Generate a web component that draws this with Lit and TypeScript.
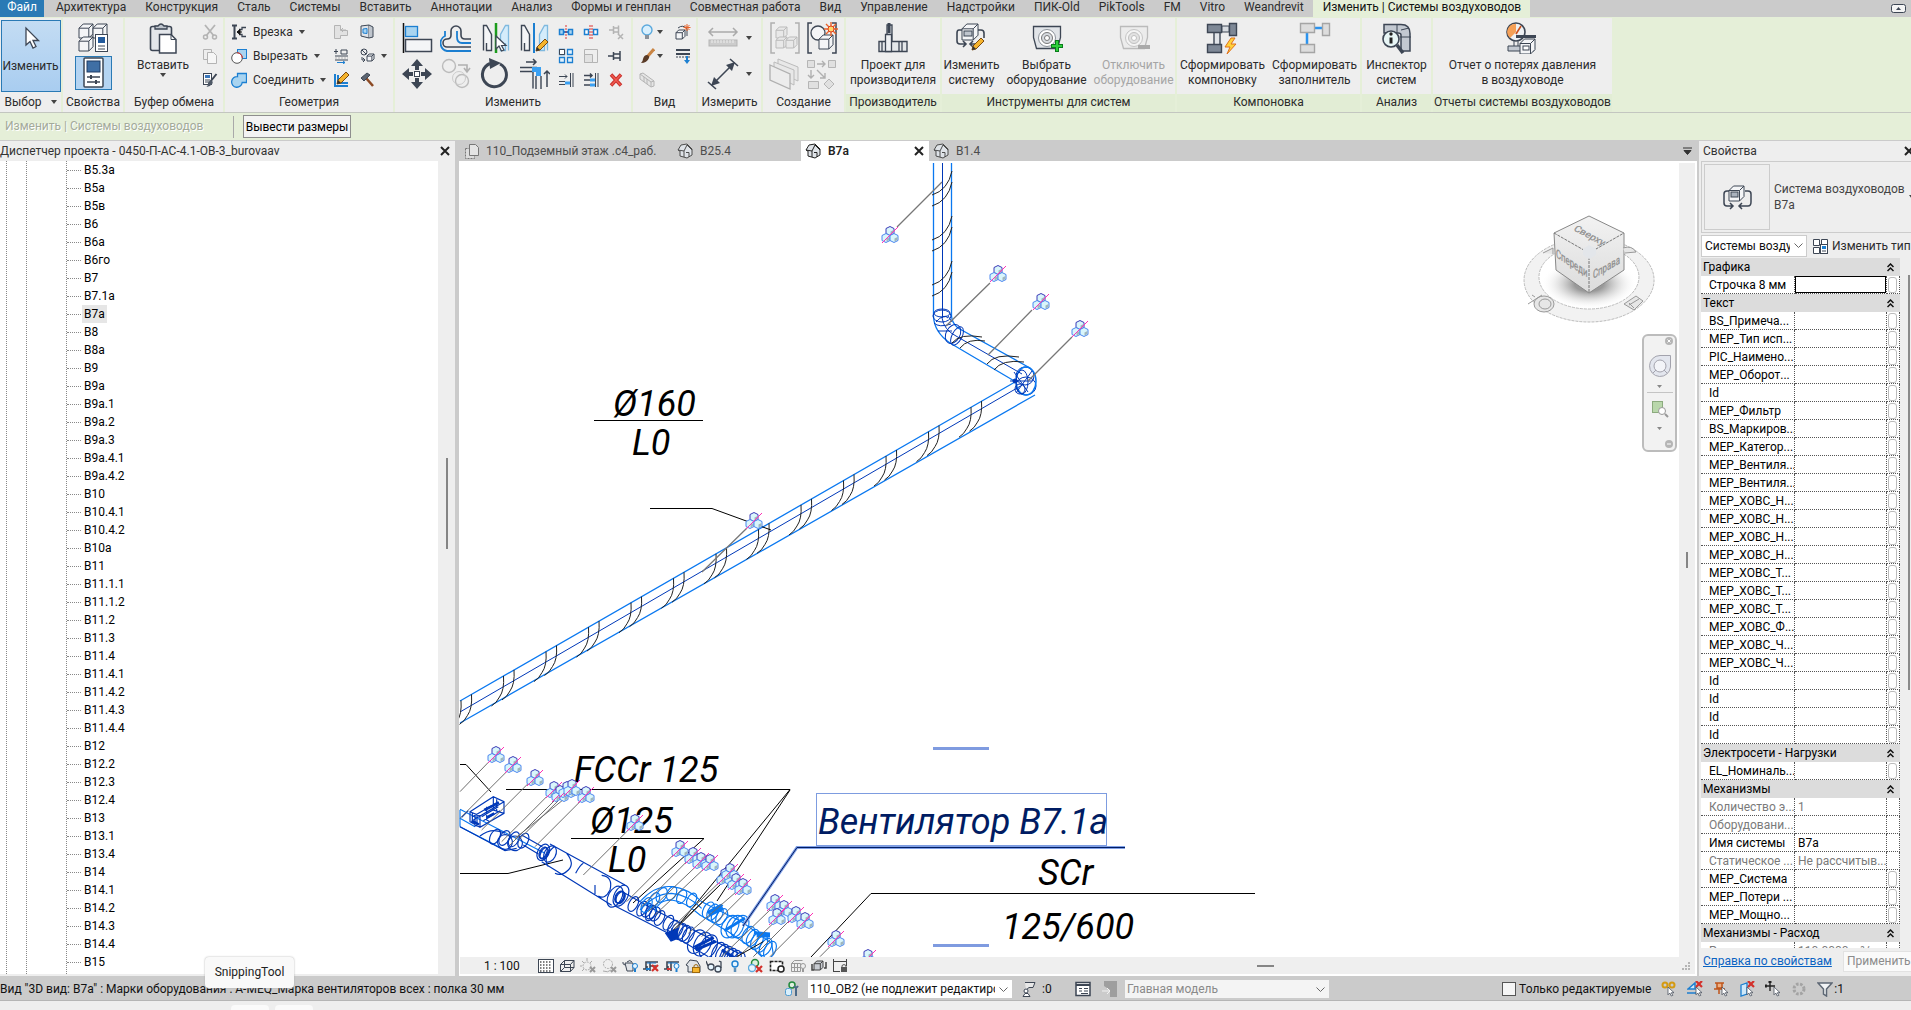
import { LitElement, html, svg, css, nothing } from "lit";
import { customElement } from "lit/decorators.js";
import { classMap } from "lit/directives/class-map.js";

const base = css`
  * { box-sizing: border-box; }
  :host { font: 12px/16px Roboto, "Open Sans", sans-serif; color: #2b2b2b; }
  button, input, select { font: inherit; color: inherit; margin: 0; padding: 0; border: 0; background: none; border-radius: 0; }
  svg { display: block; flex: none; }
  ul { list-style: none; margin: 0; padding: 0; }
`;

const D = "#3d4654";
const B = "#1c7fd1";
const L = "#a9d4f0";
const G = "#b4b4b4";
const W = "#f4f5f7";

const cursor = (x: number, y: number, s = 1) => svg`<path transform="translate(${x} ${y}) scale(${s})" d="M0 0V13L3 10L5.500 15L8 14L5.500 9.500H10Z" fill="#fff" stroke="${D}" stroke-width="1.200"/>`;
const redX = (x: number, y: number) => svg`<path d="M${x} ${y}l6 6m0-6l-6 6" stroke="#d3302b" stroke-width="2.200"/>`;
const pencil = (x: number, y: number) => svg`<path d="M${x} ${y + 12}l1-4L${x + 9} ${y}l3 3L${x + 4} ${y + 11}Z" fill="#f5b32c" stroke="#7a4a12"/><path d="M${x} ${y + 12}l1-4 3 3Z" fill="#333"/>`;
const box3 = (x: number, y: number, s: number, fill: string, st: string) => svg`<path d="M${x} ${y + s * 0.3}L${x + s * 0.3} ${y}H${x + s}V${y + s * 0.7}L${x + s * 0.7} ${y + s}H${x}Z" fill="${fill}" stroke="${st}"/><path d="M${x} ${y + s * 0.3}H${x + s * 0.7}V${y + s}M${x + s * 0.7} ${y + s * 0.3}L${x + s} ${y}" fill="none" stroke="${st}"/>`;

const icons: Record<string, [number, unknown]> = {
  cursor: [24, svg`<path d="M7 2V19L11 15.500L14 22L17 20.500L14 14.500H19.500Z" fill="#fff" stroke="${D}" stroke-width="1.300"/>`],
  typeProps: [32, svg`${box3(2, 2, 14, W, D)}${box3(16, 2, 14, W, D)}${box3(2, 15, 14, W, D)}<rect x="18.500" y="12.500" width="12" height="17" fill="#fff" stroke="${D}"/><rect x="21" y="15" width="7" height="6" fill="#245b9c"/><path d="M21 24h7M21 27h7" stroke="${D}"/>`],
  props: [32, svg`<rect x="7" y="1" width="19" height="29" rx="1" fill="#fff" stroke="${D}" stroke-width="1.500"/><rect x="10" y="4" width="13" height="11" fill="#3f6fa5" stroke="#1e3c66"/><path d="M10 20h13M10 25h13" stroke="${D}" stroke-width="1.500"/><path d="M14 18v4M19 23v4" stroke="${D}" stroke-width="2"/>`],
  paste: [32, svg`<rect x="3.500" y="4.500" width="21" height="24" rx="2" fill="#e3e6ea" stroke="${D}" stroke-width="1.600"/><path d="M8 7V4h3q3-4 6 0h3v3Z" fill="#bfc5cd" stroke="${D}" stroke-width="1.300"/><path d="M12.500 12.500H24l5 5V31H12.500Z" fill="#fff" stroke="${D}" stroke-width="1.500"/><path d="M24 12.500v5h5" fill="none" stroke="${D}"/>`],
  cut: [16, svg`<path d="M3 1L12 12M13 1L4 12" stroke="${G}" stroke-width="1.800"/><circle cx="3.500" cy="13" r="2" fill="none" stroke="${G}" stroke-width="1.500"/><circle cx="12.500" cy="13" r="2" fill="none" stroke="${G}" stroke-width="1.500"/>`],
  copy: [16, svg`<path d="M1.500 1.500h8v10h-8Z" fill="#eee" stroke="${G}"/><path d="M5.500 4.500h6l3 3v8h-9Z" fill="#f6f6f6" stroke="${G}"/>`],
  match: [16, svg`<rect x="1.500" y="1.500" width="8" height="11" fill="#fff" stroke="${D}"/><rect x="3" y="3" width="5" height="3" fill="#3b77bb"/><path d="M3 8h5M3 10h4" stroke="${D}"/><path d="M14.500 2L8.500 9.500" stroke="${D}" stroke-width="2"/><path d="M9.500 8.500q2 1 1 3q-2 3-6 3.500q2-2 1.500-4q1-3 3.500-2.500Z" fill="#4e5866"/>`],
  cope: [16, svg`<path d="M1 1.500h5M1 14.500h5M3.500 1.500v13" stroke="${D}" stroke-width="2"/><path d="M15 3.500h-4v2H8m7 7h-4v-2H8" fill="none" stroke="${D}" stroke-width="1.300"/><path d="M6 8h5M6 8l3-2.500v5Z" fill="#111" stroke="#111"/>`],
  cutg: [16, svg`<rect x="6.500" y="1.500" width="9" height="9" fill="${L}" stroke="${B}"/><circle cx="6" cy="10" r="5.300" fill="#fff" stroke="#555"/><path d="M6 4.700A5.300 5.300 0 0 1 11.300 10" fill="none" stroke="#d33"/>`],
  join: [16, svg`<path d="M6.500 1.500h9v9h-4.300A5.300 5.300 0 1 1 6.500 4.700Z" fill="${L}" stroke="${B}" stroke-width="1.300"/>`],
  wallJoin: [16, svg`<path d="M1.500 1.500h6v5h7v5h-7v3h-6Z" fill="#e2e2e2" stroke="${G}"/><path d="M13 6H8m2-2L8 6l2 2" stroke="${G}" fill="none"/>`],
  split: [16, svg`<path d="M3 1v5M1 3.500h4M8 2h6v4H8ZM2 8h13M2 12h13" fill="none" stroke="${D}"/><path d="M2 10h13" stroke="${G}" stroke-dasharray="2 1"/><path d="M4 14.500h8l-2-1.500m2 1.500l-2 1.500" fill="none" stroke="${B}"/>`],
  beam: [16, svg`<path d="M2 2v12h13M5 3v8h10" fill="none" stroke="${B}" stroke-width="2"/>${pencil(4, 0)}`],
  opening: [16, svg`<path d="M2 2l8-1v13l-8-2Z" fill="#dfe3e8" stroke="${D}"/><path d="M10 1l4 2v10l-4 1" fill="#bfc5cd" stroke="${D}"/><path d="M4 5l4-.5v5L4 9Z" fill="${L}" stroke="${B}"/>`],
  paint: [16, svg`<circle cx="5" cy="4" r="3" fill="#eee" stroke="${D}"/><path d="M3 2l4 4M3 9v3h3m-2-2l2 2-2 2" fill="none" stroke="${D}"/>${box3(8, 6, 7, W, D)}`],
  hammer: [16, svg`<path d="M7 6l7 8" stroke="#8c4a24" stroke-width="2.500"/><path d="M2 6l6-5 3 2-6 6Z" fill="#5b6470" stroke="${D}"/>`],
  align: [32, svg`<path d="M2.500 1v30" stroke="#111" stroke-width="1.500"/><rect x="4.500" y="4.500" width="12" height="10" fill="${L}" stroke="${B}" stroke-width="1.300"/><rect x="4.500" y="17.500" width="26" height="12" fill="${W}" stroke="${D}" stroke-width="1.500"/>`],
  offset: [32, svg`<path d="M31 25H7a4 4 0 0 1 0-8q4 0 4-4V9a5 5 0 0 1 10 0v4q0 4 4 4h6" fill="none" stroke="${D}" stroke-width="1.600"/><path d="M31 29H7a8 8 0 0 1-2-15V9M31 21h-9q-5 0-5-6V9" fill="none" stroke="${B}" stroke-width="1.800"/>`],
  mirrorPick: [32, svg`<path d="M4.500 28.500V3.500h3l5 9v16h-5V21" fill="${W}" stroke="${D}" stroke-width="1.400"/><path d="M29.500 28.500V3.500h-3l-5 9v16h5V21" fill="#d4ecfb" stroke="#7fb9df" stroke-width="1.300"/><path d="M17 1v30" stroke="#1c9c1c" stroke-width="2.500"/>${cursor(17, 14)}`],
  mirrorDraw: [32, svg`<path d="M3.500 28.500V3.500h3l5 9v16h-5V21" fill="${W}" stroke="${D}" stroke-width="1.400"/><path d="M29.500 28.500V3.500h-3l-5 9v16h5V21" fill="#d4ecfb" stroke="#7fb9df" stroke-width="1.300"/><path d="M16 1v30" stroke="${B}" stroke-width="2"/>${pencil(18, 17)}`],
  move: [32, svg`<path d="M16 1l6 7h-4v4h-4V8h-4ZM16 31l6-7h-4v-4h-4v4h-4ZM1 16l7-6v4h4v4H8v4ZM31 16l-7-6v4h-4v4h4v4Z" fill="${D}"/><rect x="13.500" y="13.500" width="5" height="5" fill="#fff" stroke="${D}"/>`],
  copy2: [32, svg`<circle cx="9" cy="8" r="6.500" fill="#eee" stroke="#bbb" stroke-width="1.400"/><circle cx="22" cy="23" r="6.500" fill="#eee" stroke="#bbb" stroke-width="1.400"/><circle cx="19" cy="20" r="6.500" fill="none" stroke="#ccc"/><path d="M18 7h9v6m-3-3l3 4 3-4" fill="none" stroke="#b0b0b0" stroke-width="1.600"/>`],
  rotate: [32, svg`<path d="M21 6A12 12 0 1 1 11 5.500" fill="none" stroke="${D}" stroke-width="3"/><path d="M10 0l12 5-11 6Z" fill="${D}"/>`],
  trim: [32, svg`<path d="M2 9.500h17M2 13.500h13v17" fill="none" stroke="${D}" stroke-width="1.400"/><path d="M14 11.500h6.500V18" fill="none" stroke="#3aa0f2" stroke-width="5"/><path d="M18 18v13M23 18v13" stroke="${D}" stroke-width="1.400"/><path d="M8 4h10m-3-3l3 3-3 3M29 29V13m-3 3l3-3 3 3" fill="none" stroke="${D}" stroke-width="1.500"/>`],
  splitEl: [16, svg`<rect x="1.500" y="5.500" width="4" height="5" fill="${L}" stroke="${B}" stroke-width="1.500"/><rect x="10.500" y="5.500" width="4" height="5" fill="${L}" stroke="${B}" stroke-width="1.500"/><path d="M5 8h6" stroke="${B}" stroke-width="2"/><path d="M8 1v14" stroke="#d33" stroke-dasharray="2 1"/>`],
  splitGap: [16, svg`<rect x="1.500" y="5.500" width="4" height="5" fill="#fff" stroke="${B}" stroke-width="1.500"/><rect x="10.500" y="5.500" width="4" height="5" fill="#fff" stroke="${B}" stroke-width="1.500"/><path d="M7 1v14M9 1v14" stroke="#d33" stroke-dasharray="2 1"/>`],
  unpin: [16, svg`<path d="M1 6h4M5.500 2v8M5.500 4h5M5.500 8h5M10.500 1.500v9" stroke="${G}" stroke-width="1.500" fill="none"/><path d="M10 10l5 5m0-5l-5 5" stroke="${G}" stroke-width="1.500"/>`],
  array: [16, svg`<path d="M1.500 1.500h5v5h-5ZM9.500 1.500h5v5h-5ZM1.500 9.500h5v5h-5ZM9.500 9.500h5v5h-5Z" fill="#e4f2fc" stroke="${B}" stroke-width="1.300"/><path d="M1.500 1.500h5v5h-5Z" fill="#fff" stroke="${D}"/>`],
  scale: [16, svg`<path d="M1.500 1.500h13v13h-13Z" fill="#eee" stroke="${G}"/><path d="M1.500 6.500h8v8h-8Z" fill="#e2e2e2" stroke="${G}"/>`],
  pin: [16, svg`<path d="M0 8h5M5.500 4v8M5.500 6h6M5.500 10h6M12 3v10" stroke="${D}" stroke-width="1.500" fill="none"/>`],
  trim1: [16, svg`<path d="M1 4.500h8m-2-2l2 2-2 2M1 9.500h6M1 12.500h6" fill="none" stroke="${D}"/><path d="M7 11h5" stroke="#3aa0f2" stroke-width="3"/><path d="M12.500 1v14M15 1v14" stroke="${D}"/>`],
  trim2: [16, svg`<path d="M1 3.500h8m-2-2l2 2-2 2M1 8h6M1 13h6" fill="none" stroke="${D}" stroke-width="1.500"/><path d="M7 8h5M7 13h5" stroke="#3aa0f2" stroke-width="3"/><path d="M12.500 1v14M15 1v14" stroke="${D}"/>`],
  del: [16, svg`<path d="M3 2.500l10 11M13 2.500L3 13.500" stroke="#c9302c" stroke-width="3.500"/><path d="M3.500 3l9 10M12.500 3l-9 10" stroke="#f05a50" stroke-width="1.500"/>`],
  bulb: [16, svg`<circle cx="8" cy="6" r="5" fill="#d8effd" stroke="#5ba9dd" stroke-width="1.400"/><rect x="6" y="11" width="4" height="4" fill="#8b9199"/>`],
  hideBox: [16, svg`${box3(1, 6, 9, W, D)}<path d="M3 4q5-4 9 1v7" fill="none" stroke="${D}"/><path d="M12 0v7M8.500 3.500h7M9.500 1l5 5m0-5l-5 5" stroke="#e8632b"/>`],
  brush: [16, svg`<path d="M15 1L8 9" stroke="#c98443" stroke-width="3"/><path d="M8 7q3 1 2 3q-2 5-8 5q2-2 2-4q1-4 4-4Z" fill="#5a3b26"/>`],
  linework: [16, svg`<path d="M1 2h14M1 6h14" stroke="${D}" stroke-width="2"/><path d="M1 9h14" stroke="${D}" stroke-dasharray="2 1"/><path d="M11 8v4H9l3 4 3-4h-2V8Z" fill="${B}"/>`],
  wallGrey: [16, svg`<path d="M1 2l3-1 11 8v5l-3 1L1 7Z" fill="#e5e5e5" stroke="${G}"/><path d="M1 2l11 8v5M12 10l3-1M5 5v5M8 7v5" stroke="${G}" fill="none"/>`],
  ruler: [32, svg`<path d="M2 10h28M6 6l-4 4 4 4M26 6l4 4-4 4" fill="none" stroke="#aaa" stroke-width="1.500"/><rect x="2" y="18" width="28" height="6" fill="#ccc" stroke="#b5b5b5"/><path d="M5 18v3M8 18v3M11 18v3M14 18v3M17 18v3M20 18v3M23 18v3M26 18v3" stroke="#eee"/>`],
  dim: [32, svg`<path d="M5 27L27 5" stroke="${D}" stroke-width="1.600"/><path d="M4 28l3-9 6 6ZM28 4l-3 9-6-6Z" fill="${D}"/><path d="M1 24l8 7M23 1l8 7" stroke="${D}" stroke-width="1.600"/>`],
  groupGrey: [32, svg`<path d="M6 1H2v30h4M26 1h4v30h-4" fill="none" stroke="#b0b0b0" stroke-width="1.500"/>${box3(7, 5, 11, "#e8e8e8", "#bbb")}${box3(7, 15, 11, "#e8e8e8", "#bbb")}${box3(17, 15, 11, "#e8e8e8", "#bbb")}`],
  assembly: [32, svg`<path d="M6 1H2v30h4M26 1h4v30h-4" fill="none" stroke="${D}" stroke-width="1.500"/><circle cx="12" cy="11" r="7" fill="${W}" stroke="${D}" stroke-width="1.300"/>${box3(13, 13, 14, W, D)}<path d="M25 0v14M18 7h14M20 2l10 10M30 2L20 12" stroke="#e8632b" stroke-width="1.400"/><circle cx="25" cy="7" r="3" fill="#ffd76a" stroke="#e23b1f"/>`],
  parts: [32, svg`<path d="M9 1l20 8v14L9 14Z" fill="#e8e8e8" stroke="#bbb"/><path d="M5 4l20 8v15L5 17Z" fill="#e8e8e8" stroke="#bbb"/><path d="M1 7l20 9v15L1 22Z" fill="#ececec" stroke="#b0b0b0" stroke-width="1.300"/>`],
  similar: [32, svg`<path d="M1.500 2.500h7v7h-7ZM22.500 2.500h7v7h-7ZM2.500 23.500h10v7h-10ZM23 21l5 5-5 5-5-5Z" fill="#e0e0e0" stroke="#b5b5b5"/><path d="M11 6h8m-3-3l3 3-3 3M5 12v8m-3-3l3 3 3-3M11 12l8 8m0-5v5h-5" stroke="#b0b0b0" fill="none" stroke-width="1.400"/>`],
  fabrication: [32, svg`<path d="M10 3h5v26h-5Z" fill="#d7dbe0" stroke="${D}" stroke-width="1.300"/><path d="M12 1v10" stroke="${D}" stroke-width="3"/><path d="M2 19.500h28v10H2Z" fill="#e4e7ea" stroke="${D}" stroke-width="1.400"/><path d="M8.500 12.500h6v17h-6ZM5 19v11M22 19v11M25 19v11" fill="#eef0f3" stroke="${D}" stroke-width="1.300"/>`],
  editSys: [32, svg`<path d="M9 8H4q-2 0-2 3v8q0 3 3 3h6M23 8h3q3 0 3 3v5M20 22h-5M8 19l3 3-3 3M18 19l-3 3 3 3" fill="none" stroke="${D}" stroke-width="1.600"/>${box3(7, 2, 16, W, D)}<rect x="9" y="9" width="8" height="5" fill="#bfc5cd" stroke="${D}"/>${pencil(17, 16)}`],
  equipAdd: [32, svg`<path d="M2.500 4.500h27v11l-3 11h-21l-3-11Z" fill="#e1e4e8" stroke="${D}" stroke-width="1.300"/><circle cx="16" cy="16" r="8.500" fill="#fff" stroke="#8b9199"/><circle cx="16" cy="16" r="5.500" fill="#d7dbe0" stroke="#777"/><circle cx="16" cy="16" r="2.500" fill="#fff" stroke="#777"/><path d="M26 18v12M20 24h12" stroke="#0a7d1c" stroke-width="4"/><path d="M26 19v10M21 24h10" stroke="#2ecf3b" stroke-width="2"/>`],
  equipDel: [32, svg`<path d="M2.500 4.500h27v11l-3 11h-21l-3-11Z" fill="#ececec" stroke="#bbb" stroke-width="1.300"/><circle cx="16" cy="16" r="8.500" fill="#f4f4f4" stroke="#c5c5c5"/><circle cx="16" cy="16" r="5.500" fill="#e2e2e2" stroke="#c0c0c0"/><circle cx="16" cy="16" r="2.500" fill="#fff" stroke="#c0c0c0"/><path d="M20 25h12" stroke="#aaa" stroke-width="4"/>`],
  layout: [32, svg`<rect x="8" y="10" width="6" height="13" fill="#e1e4e8"/><path d="M8 10v13M14 10v13" stroke="${D}" stroke-width="1.400"/><path d="M1.500 2.500h14v8h-14ZM1.500 22.500h14v8h-14ZM23.500 1.500h7v12h-7Z" fill="#7e8896" stroke="${D}" stroke-width="1.400"/><path d="M16 4h7v6h-7Z" fill="#d7dbe0" stroke="${D}"/><path d="M25 16l-6 9h5l-3 7 9-10h-5l4-6Z" fill="#ffd23b" stroke="#e0711a"/>`],
  placeholder: [32, svg`<path d="M8 10v13M15 6h9" stroke="#2b93ef" stroke-width="2.500"/><path d="M1.500 1.500h14v9h-14ZM1.500 22.500h14v8h-14ZM23.500 1.500h7v12h-7Z" fill="#ddd" stroke="#a5a5a5" stroke-width="1.400"/>`],
  inspector: [32, svg`<path d="M3 2.500h17q9 0 9 9V29H20V13q0-2-3-2H3Z" fill="#c3c9d1" stroke="${D}" stroke-width="1.500"/><path d="M19 15h11M16 2v9M20 8l8-2" stroke="${D}"/><circle cx="10" cy="17" r="8" fill="#e8f6f6" stroke="${D}" stroke-width="1.600"/><path d="M16 23l6 8" stroke="${D}" stroke-width="3.500"/><path d="M10 15.500v6" stroke="#222" stroke-width="3"/><circle cx="10" cy="12" r="1.700" fill="#222"/>`],
  pressure: [32, svg`<circle cx="10" cy="10" r="9" fill="#eef1f4" stroke="${D}" stroke-width="1.600"/><path d="M10 10L4 16A8 8 0 0 1 10 2Z" fill="#f5a057"/><path d="M10 12l5-8" stroke="#c94f1c" stroke-width="1.600"/><path d="M2 24h26v5H2ZM8 19v5M12 19v5" fill="#c3c9d1" stroke="${D}"/><path d="M10 14.500h20" stroke="${D}" stroke-width="3"/>${box3(14, 17, 15, W, D)}<rect x="17" y="24" width="6" height="4" fill="#fff" stroke="${D}"/>`],
  sysBox: [32, svg`<path d="M9 10H6q-3 0-3 3v9q0 3 3 3h6M24 10h3q3 0 3 3v8q0 4-3 4h-8M9 22l3 3-3 3M21 22l-3 3 3 3" fill="none" stroke="${D}" stroke-width="1.500"/>${box3(8, 5, 15, W, D)}<rect x="10" y="11" width="7" height="5" fill="#aab2bd" stroke="${D}"/>`],
  editType: [16, svg`<path d="M1.500 1.500h6v6h-6ZM9.500 1.500h6v6h-6ZM1.500 9.500h6v6h-6Z" fill="#fff" stroke="${D}"/><rect x="8.500" y="6.500" width="7" height="9" fill="#fff" stroke="${D}"/><rect x="10" y="8" width="4" height="3" fill="${B}"/><path d="M10 13h4" stroke="${D}"/>`],
  sheet: [16, svg`<path d="M2.500 5.500h9v10h-9Z" fill="#dcdcdc" stroke="#777" stroke-dasharray="2 1"/><path d="M6.500 1.500h6l3 3v8h-9Z" fill="#e4e4e4" stroke="#777"/>`],
  house: [16, svg`<path d="M1 7l3-5 6-1 5 5v6l-5 3-7-2V8Z" fill="#dfe3e8" stroke="currentColor"/><path d="M1 7l6 1 3-6M7 8v6M10 2l5 5M9 9.500h3V14" fill="none" stroke="currentColor"/>`],
  v1: [16, svg`<rect x=".5" y="1.500" width="15" height="13" fill="#fff" stroke="${D}"/><path d="M2 4h12M2 7h12M2 10h12M2 13h12" stroke="#555" stroke-width="1.500" stroke-dasharray="1.500 1.500"/>`],
  v2: [16, svg`<path d="M1.500 6.500h10v7h-10ZM1.500 6.500l4-4h9.500l-3.500 4M15 2.500v7l-3.500 4M5.500 2.500v7l-4 4M5.500 9.500H15" fill="none" stroke="${D}"/>`],
  v3: [16, svg`<circle cx="7" cy="8" r="4" fill="none" stroke="#aaa" stroke-dasharray="2 1"/><path d="M7 0v3M0 8h2M2 3l2 2M12 3l-2 2M2 13l2-2" stroke="#aaa"/><path d="M10 9l5 5m0-5l-5 5" stroke="#999" stroke-width="2"/>`],
  v4: [16, svg`<circle cx="7" cy="6" r="4.500" fill="none" stroke="#aaa" stroke-dasharray="2 1"/><path d="M2 13q5 2 8-1" stroke="#aaa" fill="none"/><path d="M10 9l5 5m0-5l-5 5" stroke="#999" stroke-width="2"/>`],
  v5: [16, svg`<path d="M3 5h8v8H5ZM3 7q-3-1-2-3M5 4q3-3 5 0" fill="#e1e4e8" stroke="${D}"/><circle cx="13" cy="8" r="2.500" fill="#e8f6ff" stroke="${B}"/><path d="M13 11v3" stroke="${B}" stroke-width="2"/>`],
  v6: [16, svg`<path d="M0 11h3V4h12M4 8v5M7 4v9M7 8h6" fill="none" stroke="${D}" stroke-width="1.600"/><path d="M4 5h9" stroke="${B}"/><path d="M3 11h4" stroke="${B}" stroke-width="2"/>${redX(9, 7)}`],
  v7: [16, svg`<path d="M0 11h3V4h12M4 8v5M7 4v9" fill="none" stroke="${D}" stroke-width="1.600"/><path d="M4 5h9" stroke="${B}"/><path d="M3 11h4" stroke="#d33" stroke-width="2"/><circle cx="12.500" cy="8" r="2.500" fill="#e8f6ff" stroke="${B}"/><path d="M12.500 11v3" stroke="${B}" stroke-width="2"/>`],
  v8: [16, svg`<path d="M1 7l4-5 7 1 3 5v6H3V8Z" fill="#e1e4e8" stroke="${D}"/><rect x="7.500" y="9.500" width="7" height="5" fill="#f6b62f" stroke="#9c6910"/><path d="M9 9V7.500q2-2 4 0V9" fill="none" stroke="#9c6910"/>`],
  v9: [16, svg`<circle cx="5" cy="9" r="3" fill="#e8f6ff" stroke="${D}" stroke-width="1.300"/><circle cx="12" cy="11" r="3" fill="#e8f6ff" stroke="${D}" stroke-width="1.300"/><path d="M2 8L0 3M15 10l0-6-2-1" fill="none" stroke="${D}" stroke-width="1.300"/>`],
  v10: [16, svg`<circle cx="8" cy="6" r="3" fill="#e8f6ff" stroke="${B}" stroke-width="1.400"/><path d="M8 10v4" stroke="#5b8fb8" stroke-width="2.500"/>`],
  v11: [16, svg`<circle cx="7" cy="5" r="3.500" fill="#dff0df" stroke="#228a3d" stroke-width="1.500"/><circle cx="4" cy="10" r="3.500" fill="#e8f6ff" stroke="#5ba9dd" stroke-width="1.300"/>${redX(8, 8)}`],
  v12: [16, svg`<rect x="1.500" y="3.500" width="12" height="9" fill="#fff" stroke="#222" stroke-width="1.600" stroke-dasharray="3 1"/><circle cx="12" cy="11" r="3" fill="#fff" stroke="#222" stroke-width="1.500"/>`],
  v13: [16, svg`<path d="M1.500 5.500l3-3h8M1.500 5.500h9v8h-9ZM1.500 9.500h9M4.500 5.500v8M7.500 5.500v8" fill="none" stroke="#999"/><circle cx="13" cy="8" r="2.500" fill="#eee" stroke="#999"/><path d="M13 11v3" stroke="#999" stroke-width="2"/>`],
  v14: [16, svg`${box3(3, 3, 9, "#c8ccd2", "#444")}<path d="M1 6v6h2M15 4v6h-2" fill="none" stroke="#444" stroke-width="1.500"/>`],
  v15: [16, svg`<path d="M1.500 1v13M14.500 1v7M2 3.500h12M2 13.500h6" fill="none" stroke="#444"/><rect x="9" y="9" width="6" height="5" fill="#555"/><path d="M10 9V7.500q2-2 4 0V9" fill="none" stroke="#555"/>`],
  work: [16, svg`<circle cx="8" cy="4" r="3" fill="#dff0df" stroke="#228a3d" stroke-width="1.500"/><rect x="1.500" y="7.500" width="6" height="7" rx="2" fill="#d9effc" stroke="#4e9bd0"/><path d="M12 6v9M10 5q2 3 4 0" stroke="#4b6a88" stroke-width="2" fill="none"/>`],
  request: [16, svg`<path d="M4 1.500h10l-2 5H8L5 9" fill="#e8e8e8" stroke="${D}"/><circle cx="5" cy="10" r="2" fill="#fff" stroke="${D}"/><path d="M2 15.500l2-3h3l2 3Z" fill="#fff" stroke="${D}"/>`],
  optList: [16, svg`<rect x="1" y="1.500" width="14" height="13" fill="#fff" stroke="${D}" stroke-width="1.500"/><path d="M1 4h14" stroke="${D}" stroke-width="2"/><path d="M4 7.500h3M9 7.500h4M4 10h3M9 10h4M6 12.500h7" stroke="${D}"/>`],
  optAdd: [16, svg`<path d="M3 0h13v16H9V9L3 5Z" fill="#9e9e9e"/><path d="M1 10h8m-3-3l3 3-3 3" stroke="#f2f2f2" fill="none"/>`],
  s1: [16, svg`<circle cx="4" cy="4" r="2.500" fill="none" stroke="#d49a12" stroke-width="2"/><circle cx="11" cy="4" r="2.500" fill="none" stroke="#d49a12" stroke-width="2"/>${cursor(7, 6, 0.6)}`],
  s2: [16, svg`<path d="M1 8l7-6v6ZM0 12h10" fill="#cfe9fa" stroke="${B}" stroke-width="1.500"/>${redX(9, 0)}${cursor(9, 6, 0.6)}`],
  s3: [16, svg`<path d="M2 2h9M4 2v5h5V2M1 8h11M6 8v5" fill="#f0b083" stroke="#c0561b" stroke-width="1.500"/>${cursor(9, 6, 0.6)}`],
  s4: [16, svg`<path d="M2 4l6-2v11l-6 2Z" fill="#cfe9fa" stroke="${B}" stroke-width="1.300"/>${redX(9, 0)}${cursor(8, 6, 0.6)}`],
  s5: [16, svg`<path d="M5 0v10M0 5h10M3.500 1.500L5 0l1.500 1.500M1.500 3.500L0 5l1.500 1.500" stroke="#222" fill="none" stroke-width="1.400"/>${cursor(9, 6, 0.6)}`],
  s6: [16, svg`<circle cx="8" cy="8" r="5" fill="none" stroke="#a3a3a3" stroke-width="3" stroke-dasharray="2.500 1.500"/>`],
  filter: [16, svg`<path d="M1 2h14l-5.500 6v7l-3-2V8Z" fill="#f2f4f6" stroke="#5d6774" stroke-width="1.500"/>`],
};
const icon = (n: string) => {
  const [s, body] = icons[n];
  return html`<svg width=${s} height=${s} viewBox="0 0 ${s} ${s}" fill="none" aria-hidden="true">${body}</svg>`;
};
const caret = html`<svg width="6" height="4" viewBox="0 0 6 4" aria-hidden="true"><path d="M0 0h6L3 4Z" fill="#444"/></svg>`;
const cross = html`<svg width="10" height="10" viewBox="0 0 10 10" aria-hidden="true"><path d="M1 1l8 8M9 1L1 9" stroke="#222" stroke-width="2"/></svg>`;
const chevron = html`<svg class="chev" width="9" height="6" viewBox="0 0 9 6" aria-hidden="true"><path d="M.5.5l4 4 4-4" fill="none" stroke="#666"/></svg>`;

const tabs = ["Архитектура", "Конструкция", "Сталь", "Системы", "Вставить", "Аннотации", "Анализ", "Формы и генплан", "Совместная работа", "Вид", "Управление", "Надстройки", "ПИК-Old", "PikTools", "FM", "Vitro", "Weandrevit"];

@customElement("ribbon-bar")
export class RibbonBar extends LitElement {
  static styles = [base, css`
    :host { display: block; background: #e5efd8; }
    .tabs { display: flex; height: 17px; background: #cbcbcb; overflow: hidden; }
    .tab { height: 17px; padding: 0 9px 2px 10px; line-height: 15px; white-space: nowrap; flex: none; }
    .file { width: 44px; background: #2a7ab5; color: #fff; padding: 0 0 2px; margin-right: 2px; }
    .current { background: #e5efd8; color: #111; }
    .min { margin-left: auto; margin-right: 4px; display: flex; align-items: center; gap: 4px; }
    .panels { display: flex; height: 96px; padding-top: 1px; gap: 2px; border-bottom: 1px solid #c3c6c0; }
    .panel { display: flex; flex-direction: column; background: #eee; flex: none; }
    .body { flex: 1; display: flex; justify-content: center; align-items: flex-start; padding-top: 2px; }
    .title { height: 18px; line-height: 17px; text-align: center; white-space: nowrap; overflow: hidden; }
    .title svg { display: inline-block; margin-left: 6px; vertical-align: 2px; }
    .ctx .title { background: #e2edd5; }
    .p-sel { width: 61px; } .p-props { width: 60px; } .p-clip { width: 98px; } .p-geo { width: 168px; } .p-mod { width: 236px; }
    .p-view { width: 63px; } .p-meas { width: 63px; } .p-new { width: 81px; } .p-prod { width: 94px; } .p-tools { width: 233px; }
    .p-lay { width: 183px; } .p-an { width: 69px; } .p-rep { width: 179px; }
    .big { display: flex; flex-direction: column; align-items: center; padding-top: 2px; line-height: 15px; text-align: center; white-space: nowrap; }
    .big .cap { padding-top: 4px; }
    .big[disabled] { color: #a5a5a5; }
    .modify { width: 60px; height: 72px; border: 1px solid #2a7ab5; background: linear-gradient(#c3dcf3, #a9cdf0); padding-top: 5px; }
    .modify .cap { padding-top: 9px; }
    .stack { display: flex; flex-direction: column; }
    .on { width: 37px; height: 34px; display: grid; place-items: center; border: 1px solid #2a7ab5; background: #b4d4f2; }
    .ghost { width: 37px; height: 36px; display: grid; place-items: center; }
    .small { display: flex; align-items: center; gap: 6px; height: 24px; white-space: nowrap; }
    .grid { display: grid; grid-auto-rows: 24px; align-items: center; }
    .clip { justify-content: flex-start; padding-left: 10px; gap: 11px; }
    .paste { width: 56px; }
    .geo { justify-content: space-between; padding-left: 6px; padding-right: 4px; }
    .geo .grid { grid-template-columns: 26px 22px 8px; }
    .bigs { display: grid; grid-template-columns: repeat(4, 39px); grid-auto-rows: 36px; justify-items: center; align-items: center; }
    .g25 { grid-template-columns: repeat(3, 25px); justify-items: center; }
    .view .grid { grid-template-columns: 18px 18px 16px; }
    .row36 { display: flex; align-items: center; gap: 7px; height: 36px; }
    .new { display: grid; grid-template-columns: 37px 37px; grid-auto-rows: 36px; place-items: center; }
    .tools { gap: 7px; } .lay { gap: 7px; }
    .options { height: 27px; display: flex; align-items: center; padding-left: 5px; }
    .name { width: 229px; height: 22px; line-height: 20px; border-right: 1px solid #a9a9a9; color: #a3aa9b; text-shadow: 1px 1px #fff; white-space: nowrap; }
    .show { margin-left: 9px; height: 23px; width: 108px; border: 1px solid #8e8e8e; background: #f3f3f3; color: #000; white-space: nowrap; }
  `];
  big(i: string, a: string, b = "", off = false) {
    return html`<button class="big" ?disabled=${off}>${icon(i)}<span class="cap">${a}${b ? html`<br>${b}` : nothing}</span></button>`;
  }
  b(i: string) { return html`<button aria-label=${i}>${icon(i)}</button>`; }
  panel(cls: string, title: unknown, body: unknown, bodyCls = "", ctx = false) {
    return html`<section class="panel ${cls} ${ctx ? "ctx" : ""}"><div class="body ${bodyCls}">${body}</div><div class="title">${title}</div></section>`;
  }
  render() {
    return html`
      <nav class="tabs">
        <button class="tab file">Файл</button>
        ${tabs.map((t) => html`<button class="tab">${t}</button>`)}
        <button class="tab current">Изменить | Системы воздуховодов</button>
        <button class="min" aria-label="Свернуть ленту"><svg width="16" height="10" viewBox="0 0 16 10"><rect x=".5" y=".5" width="14" height="8" rx="2" fill="#f4f4f4" stroke="${D}"/><path d="M5 6h5L7.500 3Z" fill="${D}"/></svg></button>
      </nav>
      <div class="panels">
        ${this.panel("p-sel", html`Выбор ${caret}`, html`<button class="big modify">${icon("cursor")}<span class="cap">Изменить</span></button>`)}
        ${this.panel("p-props", "Свойства", html`<div class="stack"><button class="ghost" aria-label="Свойства типа">${icon("typeProps")}</button><button class="on" aria-label="Свойства">${icon("props")}</button></div>`)}
        ${this.panel("p-clip", "Буфер обмена", html`<button class="big paste">${icon("paste")}<span class="cap">Вставить</span>${caret}</button><div class="grid">${["cut", "copy", "match"].map((i) => this.b(i))}</div>`, "clip")}
        ${this.panel("p-geo", "Геометрия", html`<div class="stack">
            <button class="small">${icon("cope")}Врезка ${caret}</button><button class="small">${icon("cutg")}Вырезать ${caret}</button><button class="small">${icon("join")}Соединить ${caret}</button></div>
          <div class="grid">${this.b("wallJoin")}${this.b("opening")}<i></i>${this.b("split")}${this.b("paint")}${caret}${this.b("beam")}${this.b("hammer")}</div>`, "geo")}
        ${this.panel("p-mod", "Изменить", html`<div class="bigs">${["align", "offset", "mirrorPick", "mirrorDraw", "move", "copy2", "rotate", "trim"].map((i) => this.b(i))}</div>
          <div class="grid g25">${["splitEl", "splitGap", "unpin", "array", "scale", "pin", "trim1", "trim2", "del"].map((i) => this.b(i))}</div>`)}
        ${this.panel("p-view", "Вид", html`<div class="grid">${this.b("bulb")}${caret}${this.b("hideBox")}${this.b("brush")}${caret}${this.b("linework")}${this.b("wallGrey")}</div>`, "view")}
        ${this.panel("p-meas", "Измерить", html`<div class="stack"><button class="row36" aria-label="Измерить">${icon("ruler")}${caret}</button><button class="row36" aria-label="Размер">${icon("dim")}${caret}</button></div>`)}
        ${this.panel("p-new", "Создание", html`<div class="new">${["groupGrey", "assembly", "parts", "similar"].map((i) => this.b(i))}</div>`)}
        ${this.panel("p-prod", "Производитель", this.big("fabrication", "Проект для", "производителя"), "", true)}
        ${this.panel("p-tools", "Инструменты для систем", html`${this.big("editSys", "Изменить", "систему")}${this.big("equipAdd", "Выбрать", "оборудование")}${this.big("equipDel", "Отключить", "оборудование", true)}`, "tools", true)}
        ${this.panel("p-lay", "Компоновка", html`${this.big("layout", "Сформировать", "компоновку")}${this.big("placeholder", "Сформировать", "заполнитель")}`, "lay", true)}
        ${this.panel("p-an", "Анализ", this.big("inspector", "Инспектор", "систем"), "", true)}
        ${this.panel("p-rep", "Отчеты системы воздуховодов", this.big("pressure", "Отчет о потерях давления", "в воздуховоде"), "", true)}
      </div>
      <div class="options"><span class="name">Изменить | Системы воздуховодов</span><button class="show">Вывести размеры</button></div>`;
  }
}

const tree = "В5.3а В5а В5в В6 В6а В6го В7 В7.1а В7а В8 В8а В9 В9а В9а.1 В9а.2 В9а.3 В9а.4.1 В9а.4.2 В10 В10.4.1 В10.4.2 В10а В11 В11.1.1 В11.1.2 В11.2 В11.3 В11.4 В11.4.1 В11.4.2 В11.4.3 В11.4.4 В12 В12.2 В12.3 В12.4 В13 В13.1 В13.4 В14 В14.1 В14.2 В14.3 В14.4 В15".split(" ");

@customElement("project-browser")
export class ProjectBrowser extends LitElement {
  static styles = [base, css`
    :host { display: flex; flex-direction: column; min-height: 0; background: #eee; }
    header { height: 20px; line-height: 20px; display: flex; justify-content: space-between; align-items: center; padding-right: 5px; color: #333; white-space: nowrap; }
    .wrap { flex: 1; min-height: 0; display: flex; padding-bottom: 2px; }
    .tree { flex: 1; overflow: hidden; background: #fff; padding-left: 6px; display: flex; }
    .guide { width: 20px; border-left: 1px dotted #888; flex: none; }
    .wide { width: 40px; }
    ul { border-left: 1px dotted #888; flex: 1; }
    li { height: 18px; line-height: 18px; display: flex; align-items: center; gap: 1px; color: #000; }
    li::before { content: ""; width: 14px; border-top: 1px dotted #888; }
    li span { padding: 0 2px; }
    .sel span { background: #e6e6e6; }
    .scroll { width: 17px; padding-top: 297px; padding-left: 8px; }
    .thumb { width: 2px; height: 91px; background: #858585; }
  `];
  render() {
    return html`<header><span>Диспетчер проекта - 0450-П-АС-4.1-ОВ-3_burovaav</span><button aria-label="Закрыть">${cross}</button></header>
      <div class="wrap"><div class="tree"><div class="guide"></div><div class="guide wide"></div>
        <ul>${tree.map((t) => html`<li class=${classMap({ sel: t === "В7а" })}><span>${t}</span></li>`)}</ul></div>
        <div class="scroll"><div class="thumb"></div></div></div>`;
  }
}

const DEEP = "#0038b8";
const BRIGHT = "#0a78f0";
const cube = (x: number, y: number, st: string) => svg`<path d="M${x} ${y - 4.5}l4 2v5l-4 2-4-2v-5Z" fill="#d9f6fb" stroke="${st}"/><path d="M${x + 0.5} ${y + 0.5}l3-1.500v3l-3 1.500Z" fill="#9fb6bd"/>`;
const marker = ([x, y]: number[]) => svg`<g transform="translate(${x} ${y})">${cube(0, -4, "#3a3ab8")}${cube(-4, 3, "#4a86f0")}${cube(4, 3, "#4a86f0")}<path d="M-8 8L8 -8" stroke="#ff2fb4"/></g>`;
const markers = [[890, 235], [998, 274], [1041, 302], [1080, 329], [754, 521], [496, 755], [513, 765], [535, 778], [554, 790], [560, 794], [567, 790], [572, 788], [586, 795], [635, 823], [680, 849], [693, 856], [701, 861], [710, 863], [725, 877], [730, 872], [736, 882], [743, 887], [775, 903], [784, 909], [777, 917], [796, 915], [805, 921], [836, 939], [868, 958]];
const leaders = "M897 227L942 182M990 283L946 326M1032 310L988 355M1072 337L1028 381M747 528L702 572";
const lowLeaders = "M100 97L15 185M155 125L15 265M220 160L80 300M275 200L140 335M300 210L165 345M310 212L190 330M330 205L180 325M375 215L240 350M520 300L385 435M655 375L515 515M695 395L560 530M720 412L580 545M745 418L600 555M795 455L655 590M800 460L665 595M850 480L700 610M870 490L740 620M945 540L800 680M960 575L850 680M1005 570L895 680M1035 590L945 680M1125 650L1095 680";
const rings = (x0: number, y0: number, x1: number, y1: number, n: number, rx: number, ry: number) =>
  Array.from({ length: n }, (_, i) => {
    const t = n > 1 ? i / (n - 1) : 0;
    const x = x0 + (x1 - x0) * t, y = y0 + (y1 - y0) * t;
    return svg`<ellipse cx="${x}" cy="${y}" rx="${rx}" ry="${ry}" transform="rotate(28 ${x} ${y})"/>`;
  });
const hoops = Array.from({ length: 13 }, (_, i) => {
  const x = 461 + i * 42.5;
  const at = (px: number) => 701 - (px - 460) * 0.575;
  const one = (px: number) => `M${px} ${at(px)}q1 14 -4 21q-3 6 -8 9`;
  return one(x) + one(x + 10.5);
}).join("");

@customElement("model-view")
export class ModelView extends LitElement {
  static styles = [base, css`
    :host { display: flex; flex-direction: column; min-width: 0; min-height: 0; background: #fff; }
    .tabs { height: 20px; background: #cbcbcb; display: flex; flex: none; color: #4d4d4d; }
    .tab { display: flex; align-items: center; gap: 7px; padding-left: 4px; white-space: nowrap; height: 20px; }
    .t1 { width: 214px; } .t2 { width: 128px; }
    .t3 { width: 128px; background: #fff; color: #222; font-weight: 600; }
    .t3 svg:last-child { margin-left: auto; margin-right: 5px; }
    .more { margin-left: auto; margin-right: 5px; }
    .stage { flex: 1; min-height: 0; position: relative; display: flex; overflow: hidden; }
    .canvas { flex: 1; min-width: 0; position: relative; overflow: hidden; }
    .draw { width: 100%; height: 100%; position: absolute; inset: 0; }
    .vscroll { width: 16px; background: #efefef; margin: 2px 2px 0 0; display: flex; align-items: center; justify-content: center; }
    .vscroll i { width: 2px; height: 16px; background: #858585; }
    .cad { font: italic 400 36px Roboto, sans-serif; }
    .cube { position: absolute; right: 24px; top: 46px; }
    .nav { position: absolute; right: 2px; top: 173px; width: 35px; height: 118px; border: 2px solid #bcbcbc; border-radius: 6px; background: #f2f2f2; }
    .bar { height: 17px; flex: none; margin: 0 2px 2px 1px; background: #efefef; display: flex; align-items: center; color: #111; }
    .scale { width: 78px; padding-left: 24px; white-space: nowrap; }
    .icons { display: flex; gap: 5px; }
    .bar button { display: block; }
    .hthumb { width: 17px; height: 2px; background: #858585; margin-left: auto; margin-right: 408px; }
    .grip { margin-right: 5px; }
  `];
  render() {
    return html`
      <div class="tabs"><button class="tab t1">${icon("sheet")}110_Подземный этаж .c4_раб.</button><button class="tab t2">${icon("house")}В25.4</button>
        <button class="tab t3">${icon("house")}В7а${cross}</button><button class="tab">${icon("house")}В1.4</button>
        <button class="more" aria-label="Список видов"><svg width="9" height="8" viewBox="0 0 9 8"><path d="M0 1h9M1 3.500h7L4.500 7.500Z" stroke="#333" fill="#333" stroke-width="1"/></svg></button></div>
      <div class="stage"><div class="canvas">
        <svg class="draw" fill="none"><g transform="translate(-459 -161)">
          <g stroke="${BRIGHT}" stroke-width="1.300"><path d="M933.500 163V316M951.500 163V316M460 701L1015 382M460 723L1035 395"/><path d="M933.500 316Q934 332 950 343L1016 382M951.500 316Q952 323 958 328L1030 368"/></g>
          <g stroke="${DEEP}"><path d="M942.500 163V318M460 712L1024 384M942 318Q944 330 956 336L1022 374"/>
            <ellipse cx="942" cy="316" rx="9" ry="6"/><ellipse cx="942" cy="313" rx="8" ry="4"/><path d="M936 322q8-9 12-4M938 331l14 0M948 316l4 6M934 323q5 5 17 1"/>
            <ellipse cx="953" cy="334" rx="7" ry="10" transform="rotate(28 953 334)"/><ellipse cx="957" cy="336" rx="5" ry="10" transform="rotate(28 957 336)"/>
            <circle cx="1025" cy="376" r="9"/><ellipse cx="1026" cy="386" rx="10" ry="9"/><ellipse cx="1026" cy="381" rx="10" ry="14" stroke="${BRIGHT}" stroke-width="1.500"/><ellipse cx="1022" cy="382" rx="6" ry="12"/><circle cx="1020" cy="389" r="5"/><path d="M1010 381h22M1014 372l14 20M1016 393l16-22"/><circle cx="1015" cy="381" r="2" fill="${DEEP}"/></g>
          <g stroke="#222"><path d="${[0, 45, 90].map((o) => `M932 ${195 + o}q16-5 20-24M932 ${206 + o}q16-5 20-24`).join("")}"/>
            <path d="M952 343q8-10 30-6M960 348q8-10 25-7M987 364q8-11 32-7M994 370q8-11 30-8"/></g>
          <path d="${hoops}" stroke="#222"/>
          <path d="${leaders}" stroke="#777" stroke-width="1.300"/>
          <g stroke="#000"><path d="M594 420.500H703M650 508.500H712L771 530M506 789.500H790L681 922M790 790L717 901M571 838.500H704L633 903M460 764.500H466L491 792M460 873.500H508L563 860M811 957L871 893.500H1255"/></g>
          <g transform="translate(455 730) scale(.33333)" stroke-width="3.500" stroke="${DEEP}">
            <path d="M15 238L270 370M15 290L150 360M15 265L60 290M15 240V290" stroke="${BRIGHT}"/>
            <path d="M45 245L115 200 147 215V250L75 292 45 275ZM45 245L75 258V292M75 258L147 215M55 270L120 232M115 200V240L147 250M50 262L130 215M60 250V290M95 230V270L105 275M80 260l50-30M85 272l50-30M52 248v34M66 256v34M20 262l20-20M125 208v34"/>
            <path d="M50 272l22 12M88 240l44-22M96 262l22-12" stroke-width="8"/>
            ${rings(120, 320, 205, 332, 4, 14, 24)}${rings(150, 336, 180, 340, 2, 22, 22)}
            <path d="M75 318Q110 290 150 310M200 315L262 350M205 345L250 372M15 290L150 362L185 355"/>
            ${rings(265, 367, 285, 372, 2, 17, 26)}${rings(264, 368, 268, 370, 3, 10, 18)}
            <path d="M285 342L510 465M260 395L470 526M335 370Q360 400 340 420Q320 440 300 430M300 348Q260 380 280 410M385 400Q375 405 362 430M440 436Q475 440 465 480Q450 510 430 498M420 465V492"/>
            ${rings(480, 500, 498, 497, 2, 20, 34)}${rings(493, 501, 497, 503, 3, 12, 19)}
            <path d="M510 490L600 540L850 670M480 528L660 620L760 680"/>
            ${rings(535, 522, 640, 578, 5, 13, 24)}${rings(575, 540, 600, 552, 3, 15, 22)}${rings(655, 595, 700, 615, 5, 15, 26)}${rings(725, 635, 760, 650, 3, 24, 38)}${rings(790, 665, 850, 695, 6, 17, 30)}
            <path d="M632 610l36-15 0 30-20 8ZM640 600l20 30M650 595l0 38" fill="${DEEP}"/><path d="M718 652l58-30M722 660l60-26M800 660l40 24" stroke-width="9"/>
          </g>
          <g transform="translate(455 730) scale(.33333)" stroke-width="3.500" stroke="${BRIGHT}">
            <path d="M555 515Q600 465 650 470Q700 475 740 515L860 575L950 640L955 675M600 545Q610 510 650 510Q690 515 735 555L820 605L900 660L930 690M555 540Q600 490 650 490Q700 495 740 535"/>
            ${rings(575, 525, 620, 495, 3, 14, 24)}${rings(650, 490, 710, 510, 3, 13, 22)}${rings(760, 540, 800, 560, 4, 15, 26)}${rings(825, 590, 855, 590, 3, 24, 36)}${rings(880, 615, 945, 660, 6, 16, 28)}
            <path d="M758 548l40-22M762 556l42-20M772 552l30-28M808 602l62-38M900 608l45 4M905 618l40 0" stroke-width="9"/>
          </g>
          <g transform="translate(455 730) scale(.33333)" stroke-width="3"><path d="${lowLeaders}" stroke="#6c6c6c"/><path d="M845 680L925 635M655 600L800 460" stroke="#111"/></g>
          <path d="M743 926L797 847.500H1125" stroke="#7f9fe6" stroke-width="3"/><path d="M743 926L797 847.500H1125" stroke="#001c63"/>
          <rect x="816.500" y="793.500" width="290" height="52" stroke="#7d9ce0"/>
          <path d="M933 748.500H989M933 945.500H989" stroke="#7f9be0" stroke-width="3"/>
          <g class="cad" fill="#000">
            <text x="613" y="416">Ø160</text><text x="632" y="455">L0</text><text x="574" y="782">FCCr 125</text><text x="590" y="833">Ø125</text><text x="608" y="872">L0</text>
            <text x="818" y="834" fill="#001c63">Вентилятор В7.1а</text><text x="1038" y="885">SCr</text><text x="1002" y="939">125/600</text></g>
          ${markers.map(marker)}
        </g></svg>
        <svg class="cube" width="132" height="118" viewBox="0 0 132 118" fill="none">
          <defs><radialGradient id="sh"><stop offset=".3" stop-color="#999"/><stop offset="1" stop-color="#fff" stop-opacity="0"/></radialGradient><linearGradient id="fc" x2="0" y2="1"><stop stop-color="#f2f2f2"/><stop offset="1" stop-color="#dcdcdc"/></linearGradient></defs>
          <path d="M66 31A65 42 0 1 0 66.100 31ZM66 38A50 32 0 1 1 65.900 38Z" fill="#f2f2f2" fill-rule="evenodd" stroke="#bbb" stroke-dasharray="3 1"/>
          <ellipse cx="66" cy="77" rx="48" ry="25" fill="url(#sh)"/>
          <path d="M31 26L66 9 101 26V63L66 86 33 63Z" fill="url(#fc)" stroke="#888"/><path d="M31 26L66 46 101 26M66 46V86" stroke="#777" stroke-dasharray="3 1"/>
          <path d="M60 42l6-4 7 4v6l-7 4-6-4Z" fill="#e3e6ea"/>
          <g font-size="12" fill="#8f8f8f" stroke="#8f8f8f" stroke-width=".3"><text transform="matrix(.75 .4 -.5 .6 50 23)">Сверху</text><text transform="matrix(.65 .42 0 1 33 50)">Спереди</text><text transform="matrix(.65 -.38 0 1 70 72)">Справа</text></g>
          <g stroke="#999" fill="#e6e6e6"><ellipse cx="21" cy="97" rx="10" ry="8"/><ellipse cx="22" cy="97" rx="6" ry="5"/><path d="M5 97l14-9M12 90l-3-2M101 97l12-8 7 5-9 9ZM106 98l10-6M111 101l-5-5M20 46l10-5v6M100 41q9-3 13 4l-11 1"/></g>
        </svg>
        <div class="nav"><svg width="31" height="114" viewBox="0 0 31 114" fill="none"><circle cx="25" cy="5" r="4" fill="#b5b5b5"/><path d="M23.500 3.500l3 3m0-3l-3 3" stroke="#fff"/><path d="M16 19.500h10.500V31A10.500 10.500 0 1 1 16 19.500Z" fill="#e3e6ee" stroke="#a3a3ad"/><circle cx="16" cy="30" r="6" fill="#f3f4f8" stroke="#a3a3ad"/><path d="M9 37l3-3M23 37l-3-3" stroke="#a3a3ad"/><path d="M13 49h5l-2.500 3ZM13 91h5l-2.500 3Z" fill="#888"/><path d="M3 56.500h26" stroke="#c4c4c4"/><rect x="8.500" y="65.500" width="10" height="11" fill="#b9d7ab" stroke="#8cab7e"/><circle cx="18" cy="75" r="3.500" fill="#fff" stroke="#999"/><path d="M21 78l3 3" stroke="#999" stroke-width="2"/><circle cx="25" cy="108" r="4" fill="#b5b5b5"/><path d="M23 108h4" stroke="#fff"/></svg></div>
      </div><div class="vscroll"><i></i></div></div>
      <div class="bar"><span class="scale">1 : 100</span><span class="icons">${Array.from({ length: 15 }, (_, i) => html`<button aria-label="Параметр вида ${i + 1}">${icon("v" + (i + 1))}</button>`)}</span><span class="hthumb"></span>
        <svg class="grip" width="8" height="8" viewBox="0 0 8 8"><path d="M6 0h2v2H6ZM3 3h2v2H3ZM6 3h2v2H6ZM0 6h2v2H0ZM3 6h2v2H3ZM6 6h2v2H6Z" fill="#b5b5b5"/></svg></div>`;
  }
}

type Row = { h?: string; n?: string; v?: string; dim?: boolean; nb?: boolean; edit?: boolean };
const names = ["BS_Примеча...", "MEP_Тип исп...", "PIC_Наимено...", "MEP_Оборот...", "Id", "MEP_Фильтр", "BS_Маркиров...", "MEP_Категор...", "MEP_Вентиля...", "MEP_Вентиля...", "MEP_ХОВС_Н...", "MEP_ХОВС_Н...", "MEP_ХОВС_Н...", "MEP_ХОВС_Н...", "MEP_ХОВС_Т...", "MEP_ХОВС_Т...", "MEP_ХОВС_Т...", "MEP_ХОВС_Ф...", "MEP_ХОВС_Ч...", "MEP_ХОВС_Ч...", "Id", "Id", "Id", "Id"];
const rows: Row[] = [
  { h: "Графика" }, { n: "Строчка 8 мм", edit: true }, { h: "Текст" }, ...names.map((n) => ({ n })),
  { h: "Электросети - Нагрузки" }, { n: "EL_Номиналь..." }, { h: "Механизмы" },
  { n: "Количество э...", v: "1", dim: true, nb: true }, { n: "Оборудовани...", dim: true, nb: true }, { n: "Имя системы", v: "В7а", nb: true },
  { n: "Статическое ...", v: "Не рассчитыв...", dim: true, nb: true }, { n: "MEP_Система" }, { n: "MEP_Потери ..." }, { n: "MEP_Мощно..." },
  { h: "Механизмы - Расход" }, { n: "Расход", v: "110.0000 м³/ч", dim: true, nb: true },
];

@customElement("properties-panel")
export class PropertiesPanel extends LitElement {
  static styles = [base, css`
    :host { display: flex; flex-direction: column; min-height: 0; overflow: hidden; background: #eee; padding-left: 2px; }
    header { height: 20px; line-height: 21px; display: flex; justify-content: space-between; align-items: center; padding-left: 2px; white-space: nowrap; color: #333; flex: none; }
    header button { width: 7px; overflow: hidden; }
    .type { height: 72px; border: 1px solid #ccc; border-width: 1px 0 1px 1px; display: flex; align-items: center; gap: 4px; padding-left: 2px; flex: none; color: #444; white-space: nowrap; }
    .type > svg { margin-left: auto; }
    .pic { width: 66px; height: 66px; border: 1px solid #ccc; display: grid; place-items: center; flex: none; }
    .filter { height: 25px; display: flex; align-items: center; gap: 5px; flex: none; white-space: nowrap; }
    .combo { position: relative; width: 106px; height: 22px; flex: none; }
    select { width: 100%; height: 100%; appearance: none; background: #fff; border: 1px solid #ccc; padding: 0 16px 0 3px; color: #111; overflow: hidden; }
    .chev { position: absolute; right: 4px; top: 8px; pointer-events: none; }
    .edit { display: flex; align-items: center; gap: 4px; }
    .list { flex: 1; min-height: 0; display: flex; justify-content: space-between; overflow: hidden; }
    .clip { flex: 1; overflow: hidden; }
    table { width: 100%; border-collapse: separate; border-spacing: 0; table-layout: fixed; background: #fff; }
    td, th { height: 18px; padding: 0; font-weight: 400; text-align: left; white-space: nowrap; line-height: 16px; color: #000; overflow: hidden; }
    .cn { width: 94px; } .cb { width: 13px; }
    td, .n { border-bottom: 1px dotted #555; border-right: 1px dotted #555; }
    .n { padding-left: 8px; } td { padding-left: 3px; }
    td.b { padding: 0 1px; }
    td.b button { display: block; width: 9px; height: 16px; border: 1px solid #bbb; border-radius: 3px; background: #fff; }
    .dim th, .dim td { color: #7a7a7a; }
    .cat { background: #dcdcdc; padding-left: 2px; }
    .cat button { float: right; margin: 4px 6px 0 0; }
    td.e { padding: 0; }
    .e input { width: 100%; height: 17px; border: 1px solid #000; display: block; background: #fff; }
    .track { width: 11px; padding-top: 17px; padding-left: 8px; }
    .track i { display: block; width: 2px; height: 415px; background: #8a8a8a; }
    footer { height: 28px; display: flex; align-items: center; justify-content: space-between; padding: 0 0 2px 2px; flex: none; white-space: nowrap; }
    a { color: #0a63c2; }
    .apply { height: 21px; width: 68px; border: 1px solid #e2e2e2; border-right: 0; background: #fafafa; color: #8c8c8c; padding-left: 3px; text-align: left; overflow: hidden; }
  `];
  row(r: Row) {
    if (r.h) return html`<tr><th class="cat" colspan="3" scope="colgroup">${r.h}<button aria-label="Свернуть"><svg width="7" height="9" viewBox="0 0 7 9"><path d="M.5 4l3-3 3 3M.5 8l3-3 3 3" fill="none" stroke="#111" stroke-width="1.500"/></svg></button></th></tr>`;
    return html`<tr class=${r.dim ? "dim" : ""}><th class="n" scope="row">${r.edit ? html`<label for="line8">${r.n}</label>` : r.n}</th>
      <td class=${r.edit ? "e" : ""}>${r.edit ? html`<input id="line8">` : r.v ?? ""}</td><td class="b">${r.nb ? nothing : html`<button aria-label="Связать параметр"></button>`}</td></tr>`;
  }
  render() {
    return html`<header>Свойства<button aria-label="Закрыть">${cross}</button></header>
      <div class="type"><div class="pic">${icon("sysBox")}</div><div>Система воздуховодов<br>В7а</div>${caret}</div>
      <div class="filter"><div class="combo"><select aria-label="Фильтр"><option>Системы возду</option></select>${chevron}</div><button class="edit">${icon("editType")}Изменить тип</button></div>
      <div class="list"><div class="clip"><table><colgroup><col class="cn"><col><col class="cb"></colgroup><tbody>${rows.map((r) => this.row(r))}</tbody></table></div><div class="track"><i></i></div></div>
      <footer><a href="#help">Справка по свойствам</a><button class="apply" disabled>Применить</button></footer>`;
  }
}

@customElement("status-bar")
export class StatusBar extends LitElement {
  static styles = [base, css`
    :host { display: flex; align-items: center; height: 25px; padding-top: 1px; background: #cbcbcb; border-bottom: 1px solid #b5b5b5; color: #111; white-space: nowrap; box-sizing: border-box; }
    .msg { width: 784px; flex: none; overflow: hidden; }
    .combo { position: relative; width: 204px; height: 18px; margin: 0 9px 0 8px; flex: none; }
    select { width: 100%; height: 18px; appearance: none; background: #fff; padding: 0 17px 0 2px; color: #111; }
    .dis { opacity: 1; color: #8a8a8a; background: #f4f4f4; }
    .chev { position: absolute; right: 4px; top: 7px; pointer-events: none; }
    .n { width: 28px; padding-left: 5px; }
    .gap { margin-left: 10px; }
    .only { margin-left: auto; display: flex; align-items: center; gap: 3px; margin-right: 10px; }
    .only input { appearance: none; width: 14px; height: 14px; border: 1px solid #555; background: #f5f5f5; }
    .icons { display: flex; gap: 10px; }
    .f { padding: 0 67px 0 1px; }
  `];
  render() {
    return html`<span class="msg">Вид "3D вид: В7а" : Марки оборудования : А-MEQ_Марка вентиляторов всех : полка 30 мм</span>
      ${icon("work")}<div class="combo"><select aria-label="Рабочий набор"><option>110_ОВ2 (не подлежит редактированию)</option></select>${chevron}</div>
      ${icon("request")}<span class="n">:0</span><button class="gap" aria-label="Варианты">${icon("optList")}</button><button class="gap" aria-label="Добавить">${icon("optAdd")}</button>
      <div class="combo"><select class="dis" aria-label="Вариант" disabled><option>Главная модель</option></select>${chevron}</div>
      <label class="only"><input type="checkbox">Только редактируемые</label>
      <div class="icons">${["s1", "s2", "s3", "s4", "s5", "s6", "filter"].map((i) => html`<button aria-label=${i}>${icon(i)}</button>`)}</div><span class="f">:1</span>`;
  }
}

@customElement("app-root")
export class AppRoot extends LitElement {
  static styles = [base, css`
    :host { display: flex; flex-direction: column; height: 100vh; background: #cbcbcb; position: relative; overflow: hidden; }
    main { flex: 1; min-height: 0; display: grid; grid-template-columns: 456px minmax(0, 1fr) 212px; padding-top: 1px; }
    project-browser { margin-right: 1px; }
    model-view { margin: 0 2px 0 3px; }
    .task { height: 9px; background: #eee; display: flex; gap: 6px; padding: 4px 0 0 231px; }
    .task i { width: 38px; background: #fafafa; border-radius: 4px 4px 0 0; }
    .tip { position: absolute; left: 205px; bottom: 22px; width: 89px; height: 31px; line-height: 31px; text-align: center; background: #f9f9f9; border-radius: 4px; box-shadow: 0 0 2px #aaa; color: #222; }
  `];
  render() {
    return html`<ribbon-bar></ribbon-bar><main><project-browser></project-browser><model-view></model-view><properties-panel></properties-panel></main>
      <status-bar></status-bar><div class="task"><i></i><i></i></div><div class="tip" role="tooltip">SnippingTool</div>`;
  }
}
